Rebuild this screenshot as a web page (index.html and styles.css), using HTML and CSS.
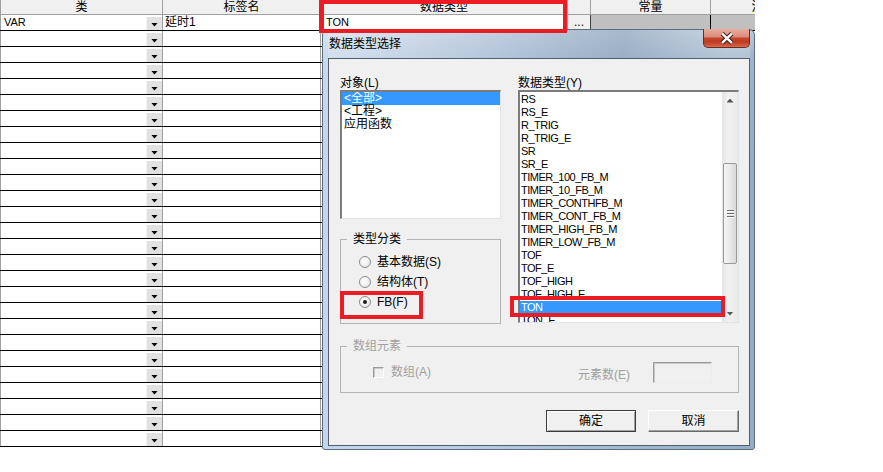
FILE: index.html
```html
<!DOCTYPE html>
<html lang="zh-CN">
<head>
<meta charset="utf-8">
<title>数据类型选择</title>
<link rel="stylesheet" href="styles.css">
</head>
<body>
<div class="screen">
  <div class="sheet">
    <div class="row head">
      <div class="c c1">类</div>
      <div class="c c2">标签名</div>
      <div class="c c3">数据类型</div>
      <div class="c c4"></div>
      <div class="c c5">常量</div>
      <div class="c c6">注释</div>
    </div>
    <div class="row first">
      <div class="c c1"><span class="val">VAR</span><span class="drop"></span></div>
      <div class="c c2">延时1</div>
      <div class="c c3">TON</div>
      <div class="c c4">...</div>
      <div class="c c5"></div>
      <div class="c c6"></div>
    </div>
    <div class="row"><div class="c c1"><span class="val"></span><span class="drop"></span></div><div class="c c2"></div><div class="c c3"></div><div class="c c4"></div><div class="c c5"></div><div class="c c6"></div></div>
    <div class="row"><div class="c c1"><span class="val"></span><span class="drop"></span></div><div class="c c2"></div><div class="c c3"></div><div class="c c4"></div><div class="c c5"></div><div class="c c6"></div></div>
    <div class="row"><div class="c c1"><span class="val"></span><span class="drop"></span></div><div class="c c2"></div><div class="c c3"></div><div class="c c4"></div><div class="c c5"></div><div class="c c6"></div></div>
    <div class="row"><div class="c c1"><span class="val"></span><span class="drop"></span></div><div class="c c2"></div><div class="c c3"></div><div class="c c4"></div><div class="c c5"></div><div class="c c6"></div></div>
    <div class="row"><div class="c c1"><span class="val"></span><span class="drop"></span></div><div class="c c2"></div><div class="c c3"></div><div class="c c4"></div><div class="c c5"></div><div class="c c6"></div></div>
    <div class="row"><div class="c c1"><span class="val"></span><span class="drop"></span></div><div class="c c2"></div><div class="c c3"></div><div class="c c4"></div><div class="c c5"></div><div class="c c6"></div></div>
    <div class="row"><div class="c c1"><span class="val"></span><span class="drop"></span></div><div class="c c2"></div><div class="c c3"></div><div class="c c4"></div><div class="c c5"></div><div class="c c6"></div></div>
    <div class="row"><div class="c c1"><span class="val"></span><span class="drop"></span></div><div class="c c2"></div><div class="c c3"></div><div class="c c4"></div><div class="c c5"></div><div class="c c6"></div></div>
    <div class="row"><div class="c c1"><span class="val"></span><span class="drop"></span></div><div class="c c2"></div><div class="c c3"></div><div class="c c4"></div><div class="c c5"></div><div class="c c6"></div></div>
    <div class="row"><div class="c c1"><span class="val"></span><span class="drop"></span></div><div class="c c2"></div><div class="c c3"></div><div class="c c4"></div><div class="c c5"></div><div class="c c6"></div></div>
    <div class="row"><div class="c c1"><span class="val"></span><span class="drop"></span></div><div class="c c2"></div><div class="c c3"></div><div class="c c4"></div><div class="c c5"></div><div class="c c6"></div></div>
    <div class="row"><div class="c c1"><span class="val"></span><span class="drop"></span></div><div class="c c2"></div><div class="c c3"></div><div class="c c4"></div><div class="c c5"></div><div class="c c6"></div></div>
    <div class="row"><div class="c c1"><span class="val"></span><span class="drop"></span></div><div class="c c2"></div><div class="c c3"></div><div class="c c4"></div><div class="c c5"></div><div class="c c6"></div></div>
    <div class="row"><div class="c c1"><span class="val"></span><span class="drop"></span></div><div class="c c2"></div><div class="c c3"></div><div class="c c4"></div><div class="c c5"></div><div class="c c6"></div></div>
    <div class="row"><div class="c c1"><span class="val"></span><span class="drop"></span></div><div class="c c2"></div><div class="c c3"></div><div class="c c4"></div><div class="c c5"></div><div class="c c6"></div></div>
    <div class="row"><div class="c c1"><span class="val"></span><span class="drop"></span></div><div class="c c2"></div><div class="c c3"></div><div class="c c4"></div><div class="c c5"></div><div class="c c6"></div></div>
    <div class="row"><div class="c c1"><span class="val"></span><span class="drop"></span></div><div class="c c2"></div><div class="c c3"></div><div class="c c4"></div><div class="c c5"></div><div class="c c6"></div></div>
    <div class="row"><div class="c c1"><span class="val"></span><span class="drop"></span></div><div class="c c2"></div><div class="c c3"></div><div class="c c4"></div><div class="c c5"></div><div class="c c6"></div></div>
    <div class="row"><div class="c c1"><span class="val"></span><span class="drop"></span></div><div class="c c2"></div><div class="c c3"></div><div class="c c4"></div><div class="c c5"></div><div class="c c6"></div></div>
    <div class="row"><div class="c c1"><span class="val"></span><span class="drop"></span></div><div class="c c2"></div><div class="c c3"></div><div class="c c4"></div><div class="c c5"></div><div class="c c6"></div></div>
    <div class="row"><div class="c c1"><span class="val"></span><span class="drop"></span></div><div class="c c2"></div><div class="c c3"></div><div class="c c4"></div><div class="c c5"></div><div class="c c6"></div></div>
    <div class="row"><div class="c c1"><span class="val"></span><span class="drop"></span></div><div class="c c2"></div><div class="c c3"></div><div class="c c4"></div><div class="c c5"></div><div class="c c6"></div></div>
    <div class="row"><div class="c c1"><span class="val"></span><span class="drop"></span></div><div class="c c2"></div><div class="c c3"></div><div class="c c4"></div><div class="c c5"></div><div class="c c6"></div></div>
    <div class="row"><div class="c c1"><span class="val"></span><span class="drop"></span></div><div class="c c2"></div><div class="c c3"></div><div class="c c4"></div><div class="c c5"></div><div class="c c6"></div></div>
    <div class="row"><div class="c c1"><span class="val"></span><span class="drop"></span></div><div class="c c2"></div><div class="c c3"></div><div class="c c4"></div><div class="c c5"></div><div class="c c6"></div></div>
    <div class="row"><div class="c c1"><span class="val"></span><span class="drop"></span></div><div class="c c2"></div><div class="c c3"></div><div class="c c4"></div><div class="c c5"></div><div class="c c6"></div></div>
  </div>

  <div class="dialog">
    <div class="titlebar">
      <span class="title">数据类型选择</span>
      <span class="close">
        <svg width="47" height="19" viewBox="0 0 47 19">
          <path d="M19.5 4.5 L29.5 14 M29.5 4.5 L19.5 14" stroke="#3b2420" stroke-width="4.6" fill="none"/>
          <path d="M19.5 4.5 L29.5 14 M29.5 4.5 L19.5 14" stroke="#ffffff" stroke-width="2.4" fill="none"/>
        </svg>
      </span>
    </div>
    <div class="client">
      <div class="top">
        <div class="col-left">
          <div class="lbl">对象(L)</div>
          <div class="list list-obj">
            <div class="item sel">&lt;全部&gt;</div>
            <div class="item">&lt;工程&gt;</div>
            <div class="item">应用函数</div>
          </div>
          <fieldset class="group kinds">
            <legend>类型分类</legend>
            <div class="radio"><span class="rb"></span>基本数据(S)</div>
            <div class="radio"><span class="rb"></span>结构体(T)</div>
            <div class="radio"><span class="rb on"></span>FB(F)</div>
          </fieldset>
        </div>
        <div class="col-right">
          <div class="lbl">数据类型(Y)</div>
          <div class="list list-type">
            <div class="items">
              <div class="item">RS</div>
              <div class="item">RS_E</div>
              <div class="item">R_TRIG</div>
              <div class="item">R_TRIG_E</div>
              <div class="item">SR</div>
              <div class="item">SR_E</div>
              <div class="item">TIMER_100_FB_M</div>
              <div class="item">TIMER_10_FB_M</div>
              <div class="item">TIMER_CONTHFB_M</div>
              <div class="item">TIMER_CONT_FB_M</div>
              <div class="item">TIMER_HIGH_FB_M</div>
              <div class="item">TIMER_LOW_FB_M</div>
              <div class="item">TOF</div>
              <div class="item">TOF_E</div>
              <div class="item">TOF_HIGH</div>
              <div class="item">TOF_HIGH_E</div>
              <div class="item sel">TON</div>
              <div class="item">TON_E</div>
            </div>
            <div class="vscroll">
              <div class="sb-btn sb-up"></div>
              <div class="sb-track">
                <div class="thumb"><span class="grip"></span><span class="grip"></span><span class="grip"></span></div>
              </div>
              <div class="sb-btn sb-down"></div>
            </div>
          </div>
        </div>
      </div>
      <fieldset class="group arr">
        <legend>数组元素</legend>
        <div class="arr-row">
          <span class="cb"></span>
          <span class="arr-lbl">数组(A)</span>
          <span class="count-lbl">元素数(E)</span>
          <span class="count"></span>
        </div>
      </fieldset>
      <div class="buttons">
        <button class="btn btn-ok">确定</button>
        <button class="btn btn-cancel">取消</button>
      </div>
    </div>
  </div>

  <div class="mark mark-head"></div>
  <div class="mark mark-fb"></div>
  <div class="mark mark-ton"></div>
</div>
</body>
</html>
```

FILE: styles.css
```css
* { box-sizing: border-box; }
html, body { margin: 0; padding: 0; background: #fff; }
body {
  font-family: "Liberation Sans", "Noto Sans CJK SC", sans-serif;
  font-size: 12px;
  color: #000;
}
.screen { position: relative; width: 883px; height: 472px; overflow: hidden; }

/* ---------- spreadsheet ---------- */
.sheet { width: 755px; height: 450px; overflow: hidden; }
.row {
  display: flex;
  width: 832px;
  height: 16px;
  border-bottom: 1px solid #000;
}
.row.head { height: 15px; background: #f0f0f0; border-bottom-color: #a0a0a0; }
.c {
  flex: none;
  height: 100%;
  border-right: 1px solid #a0a0a0;
  overflow: hidden;
  white-space: nowrap;
  line-height: 15px;
}
.head .c { text-align: center; line-height: 14px; }
.c1 { width: 163px; border-left: 1px solid #a0a0a0; display: flex; }
.head .c1 { display: block; }
.c2 { width: 158px; padding-left: 2px; }
.c3 { width: 247px; padding-left: 5px; font-size: 11px; }
.c4 { width: 23px; text-align: center; }
.c5 { width: 120px; }
.c6 { width: 106px; }
.head .c2, .head .c3 { padding-left: 0; font-size: 12px; }
.first .c4 { background: #f0f0f0; border-right-color: #404040; }
.first .c5 { background: #c0c0c0; border-right-color: #000; }
.first .c6 { background: #c0c0c0; }
.val { flex: 1; padding-left: 3px; font-size: 11px; }
.drop {
  width: 16px;
  height: 13px;
  margin-top: 2px;
  background: #e1e1e1;
  border-left: 1px solid #f3f3f3;
  display: flex;
  align-items: center;
  justify-content: center;
}
.drop::after {
  content: "";
  width: 7px;
  height: 4px;
  margin-top: 2px;
  background: #000;
  clip-path: polygon(0 0, 100% 0, 50% 100%);
}

/* ---------- dialog ---------- */
.dialog {
  position: absolute;
  left: 322px;
  top: 29px;
  width: 433px;
  height: 421px;
  border: 1px solid #5d6d7e;
  border-radius: 6px 6px 3px 3px;
  padding: 0 4px 3px 5px;
  background:
    linear-gradient(180deg, rgba(255,255,255,0.35) 0, rgba(255,255,255,0.1) 28px, rgba(255,255,255,0) 140px),
    linear-gradient(90deg, #c4d6e9 0%, #b8cce1 35%, #a3bad1 70%, #94acc5 100%);
  display: flex;
  flex-direction: column;
}
.titlebar {
  height: 28px;
  display: flex;
  align-items: center;
  background: linear-gradient(90deg, rgba(255,255,255,0.15) 0%, rgba(140,160,185,0.25) 45%, rgba(120,140,165,0.35) 70%, rgba(255,255,255,0.2) 95%);
}
.title { line-height: 14px; padding-left: 1px; }
.close {
  margin-left: auto;
  align-self: flex-start;
  margin-top: -1px;
  width: 47px;
  height: 19px;
  border: 1px solid #6e2a1f;
  border-top: none;
  border-radius: 0 0 5px 5px;
  background: linear-gradient(180deg, #e8ada0 0%, #dc8d7b 42%, #c6452d 52%, #bf3a22 72%, #d66a50 100%);
  overflow: hidden;
  display: flex;
}
.close svg { margin-left: -1px; }
.client {
  height: 388px;
  border: 1px solid #4f5d6c;
  background: #f0f0f0;
  padding: 18px 10px 0 11px;
}
.top { display: flex; gap: 17px; }
.col-left { width: 161px; }
.col-right { width: 221px; }
.lbl { height: 13px; line-height: 13px; white-space: nowrap; }

.list {
  background: #fff;
  border-style: solid;
  border-width: 2px 1px 1px 2px;
  border-color: #7b7b7b #e3e3e3 #e3e3e3 #7b7b7b;
  overflow: hidden;
}
.list-obj { height: 129px; }
.item { height: 13px; line-height: 13px; white-space: nowrap; }
.list-obj .item { padding-left: 2px; }
.sel { background: #3399ff; color: #fff; }

.list-type { height: 233px; display: flex; }
.items { flex: 1; padding-top: 1px; overflow: hidden; }
.list-type .item {
  padding-left: 1px;
  font-family: "Liberation Sans Narrow", "Liberation Sans", sans-serif;
  font-size: 11px;
  letter-spacing: -0.5px;
}
.vscroll {
  width: 16px;
  display: flex;
  flex-direction: column;
  background: linear-gradient(90deg, #e4e4e4, #f1f1f1 40%, #eaeaea);
}
.sb-btn { height: 17px; display: flex; align-items: center; justify-content: center; }
.sb-btn::after { content: ""; width: 7px; height: 4px; background: #555; }
.sb-up::after { clip-path: polygon(50% 0, 100% 100%, 0 100%); }
.sb-down::after { clip-path: polygon(0 0, 100% 0, 50% 100%); }
.sb-track { flex: 1; padding-top: 54px; }
.thumb {
  height: 101px;
  margin: 0 1px;
  border: 1px solid #9a9a9a;
  border-radius: 2px;
  background: linear-gradient(90deg, #f5f5f5, #e9e9e9 50%, #d9d9d9);
  display: flex;
  flex-direction: column;
  align-items: center;
  justify-content: center;
  gap: 2px;
}
.grip { width: 7px; height: 1px; background: #6a6a6a; box-shadow: 0 1px 0 #fff; }

fieldset.group {
  margin: 14px 0 0;
  padding: 6px 0 11px;
  border: 1px solid #b4b4b4;
  min-width: 0;
}
fieldset.group legend {
  margin-left: 6px;
  padding: 0 6px;
  line-height: 13px;
}
.radio {
  display: flex;
  align-items: center;
  gap: 6px;
  height: 20px;
  padding-left: 18px;
  line-height: 13px;
  white-space: nowrap;
}
.rb {
  width: 12px;
  height: 12px;
  border-radius: 50%;
  border: 1px solid #8c8c8c;
  background: radial-gradient(circle at 40% 40%, #ffffff 0, #f3f3f3 45%, #d6d6d6 100%);
  display: flex;
  align-items: center;
  justify-content: center;
}
.rb.on::after {
  content: "";
  width: 4px;
  height: 4px;
  border-radius: 50%;
  background: #1e1e1e;
}

fieldset.arr { margin-top: 16px; padding: 8px 0 9px; }
fieldset.arr legend { color: #a0a0a0; }
.arr-row {
  display: flex;
  align-items: center;
  height: 22px;
  padding: 0 26px 0 32px;
  color: #a0a0a0;
  white-space: nowrap;
}
.cb {
  width: 11px;
  height: 11px;
  border: 1px solid;
  border-color: #9a9a9a #ffffff #ffffff #9a9a9a;
  box-shadow: inset 1px 1px 0 #c9c9c9;
  background: #f0f0f0;
}
.arr-lbl { margin-left: 7px; line-height: 13px; }
.count-lbl { margin-left: auto; margin-top: 7px; line-height: 13px; }
.count {
  width: 59px;
  height: 21px;
  margin-left: 23px;
  border: 1px solid;
  border-color: #9a9a9a #ececec #ececec #9a9a9a;
  box-shadow: inset 1px 1px 0 #c8c8c8;
  background: #f0f0f0;
}

.buttons { display: flex; justify-content: flex-end; gap: 12px; margin-top: 17px; }
.btn {
  height: 22px;
  padding: 0;
  font: inherit;
  line-height: 20px;
  color: #000;
  background: #f0f0f0;
  border: 1px solid;
  text-align: center;
}
.btn-ok {
  width: 90px;
  border-color: #3c3c3c;
  box-shadow: inset 1px 1px 0 #ffffff, inset -1px -1px 0 #a0a0a0;
}
.btn-cancel {
  width: 91px;
  border-color: #ffffff #696969 #696969 #ffffff;
  box-shadow: inset -1px -1px 0 #a0a0a0;
}

/* ---------- red annotation boxes ---------- */
.mark { position: absolute; border: 4px solid #ec1c24; }
.mark-head { left: 319px; top: 0; width: 248px; height: 33px; border-left-width: 5px; }
.mark-fb { left: 340px; top: 291px; width: 83px; height: 28px; }
.mark-ton { left: 510px; top: 296px; width: 215px; height: 21px; }
```
